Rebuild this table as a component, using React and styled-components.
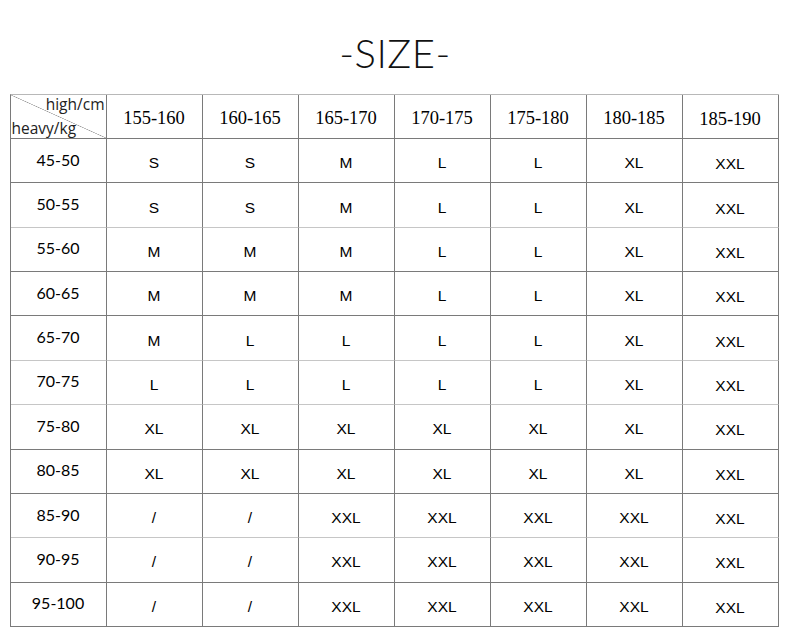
import React from "react";
import styled, { createGlobalStyle } from "styled-components";

const GlobalStyle = createGlobalStyle`
  html, body {
    margin: 0;
    padding: 0;
    background: #fff;
  }
  body {
    width: 790px;
    height: 640px;
    overflow: hidden;
    font-family: "Liberation Sans", Arial, sans-serif;
    color: #111;
  }
`;

const Page = styled.div`
  display: flex;
  flex-direction: column;
  align-items: center;
  padding-top: 26px;
`;

const Title = styled.h1`
  margin: 0;
  height: 68px;
  font-family: "Lato", "Noto Sans", sans-serif;
  font-weight: 300;
  font-size: 40px;
  line-height: 54px;
  letter-spacing: 0.5px;
  color: #111;
`;

const Table = styled.div`
  display: grid;
  grid-template-columns: repeat(8, 96px);
  grid-template-rows: 44px;
  grid-auto-rows: 44.36px;
  border-left: 1px solid #7a7a7a;
  border-top: 1px solid #b8b8b8;
  margin-left: -2px;
`;

const Cell = styled.div`
  box-sizing: border-box;
  display: flex;
  align-items: center;
  justify-content: center;
  border-right: 1px solid #7a7a7a;
  border-bottom: 1px solid ${(p) => (p.$light ? "#c6c6c6" : "#7a7a7a")};
  padding-top: ${(p) => p.$drop || 0}px;
  font-size: 15.5px;
  color: #000;
`;

const HeadCell = styled(Cell)`
  font-family: "Liberation Serif", "Times New Roman", serif;
  font-size: 18.5px;
  padding-top: ${(p) => (p.$last ? 6 : 4)}px;
`;

const LabelCell = styled(Cell)`
  font-family: "Lato", "Open Sans", sans-serif;
  font-size: 16px;
  padding-top: 0;
  padding-bottom: 3px;
`;

const CornerCell = styled.div`
  position: relative;
  box-sizing: border-box;
  border-right: 1px solid #7a7a7a;
  border-bottom: 1px solid #7a7a7a;
  background: linear-gradient(
    to top right,
    transparent calc(50% - 0.6px),
    #9a9a9a 50%,
    transparent calc(50% + 0.6px)
  );
  font-family: "Open Sans", "Noto Sans", sans-serif;
  font-size: 15.5px;
  color: #222;
`;

const CornerLabel = styled.span`
  position: absolute;
  line-height: 17px;
  ${(p) => (p.$top ? "top: 1px; right: 1px;" : "bottom: 1px; left: 1px;")}
`;

const heights = ["155-160", "160-165", "165-170", "170-175", "175-180", "180-185", "185-190"];

const rows = [
  ["45-50", ["S", "S", "M", "L", "L", "XL", "XXL"], false],
  ["50-55", ["S", "S", "M", "L", "L", "XL", "XXL"], true],
  ["55-60", ["M", "M", "M", "L", "L", "XL", "XXL"], false],
  ["60-65", ["M", "M", "M", "L", "L", "XL", "XXL"], false],
  ["65-70", ["M", "L", "L", "L", "L", "XL", "XXL"], true],
  ["70-75", ["L", "L", "L", "L", "L", "XL", "XXL"], true],
  ["75-80", ["XL", "XL", "XL", "XL", "XL", "XL", "XXL"], false],
  ["80-85", ["XL", "XL", "XL", "XL", "XL", "XL", "XXL"], false],
  ["85-90", ["/", "/", "XXL", "XXL", "XXL", "XXL", "XXL"], true],
  ["90-95", ["/", "/", "XXL", "XXL", "XXL", "XXL", "XXL"], false],
  ["95-100", ["/", "/", "XXL", "XXL", "XXL", "XXL", "XXL"], false],
];

const App = () => {
  return (
    <>
      <GlobalStyle />
      <Page>
        <Title>-SIZE-</Title>
        <Table>
          <CornerCell>
            <CornerLabel $top>high/cm</CornerLabel>
            <CornerLabel>heavy/kg</CornerLabel>
          </CornerCell>
          {heights.map((h, i) => (
            <HeadCell key={h} $last={i === 6}>
              {h}
            </HeadCell>
          ))}
          {rows.map(([label, sizes, light]) => (
            <React.Fragment key={label}>
              <LabelCell $light={light}>{label}</LabelCell>
              {sizes.map((s, i) => (
                <Cell key={i} $light={light} $drop={i === 6 ? 7 : 5}>
                  {s}
                </Cell>
              ))}
            </React.Fragment>
          ))}
        </Table>
      </Page>
    </>
  );
};

export default App;
